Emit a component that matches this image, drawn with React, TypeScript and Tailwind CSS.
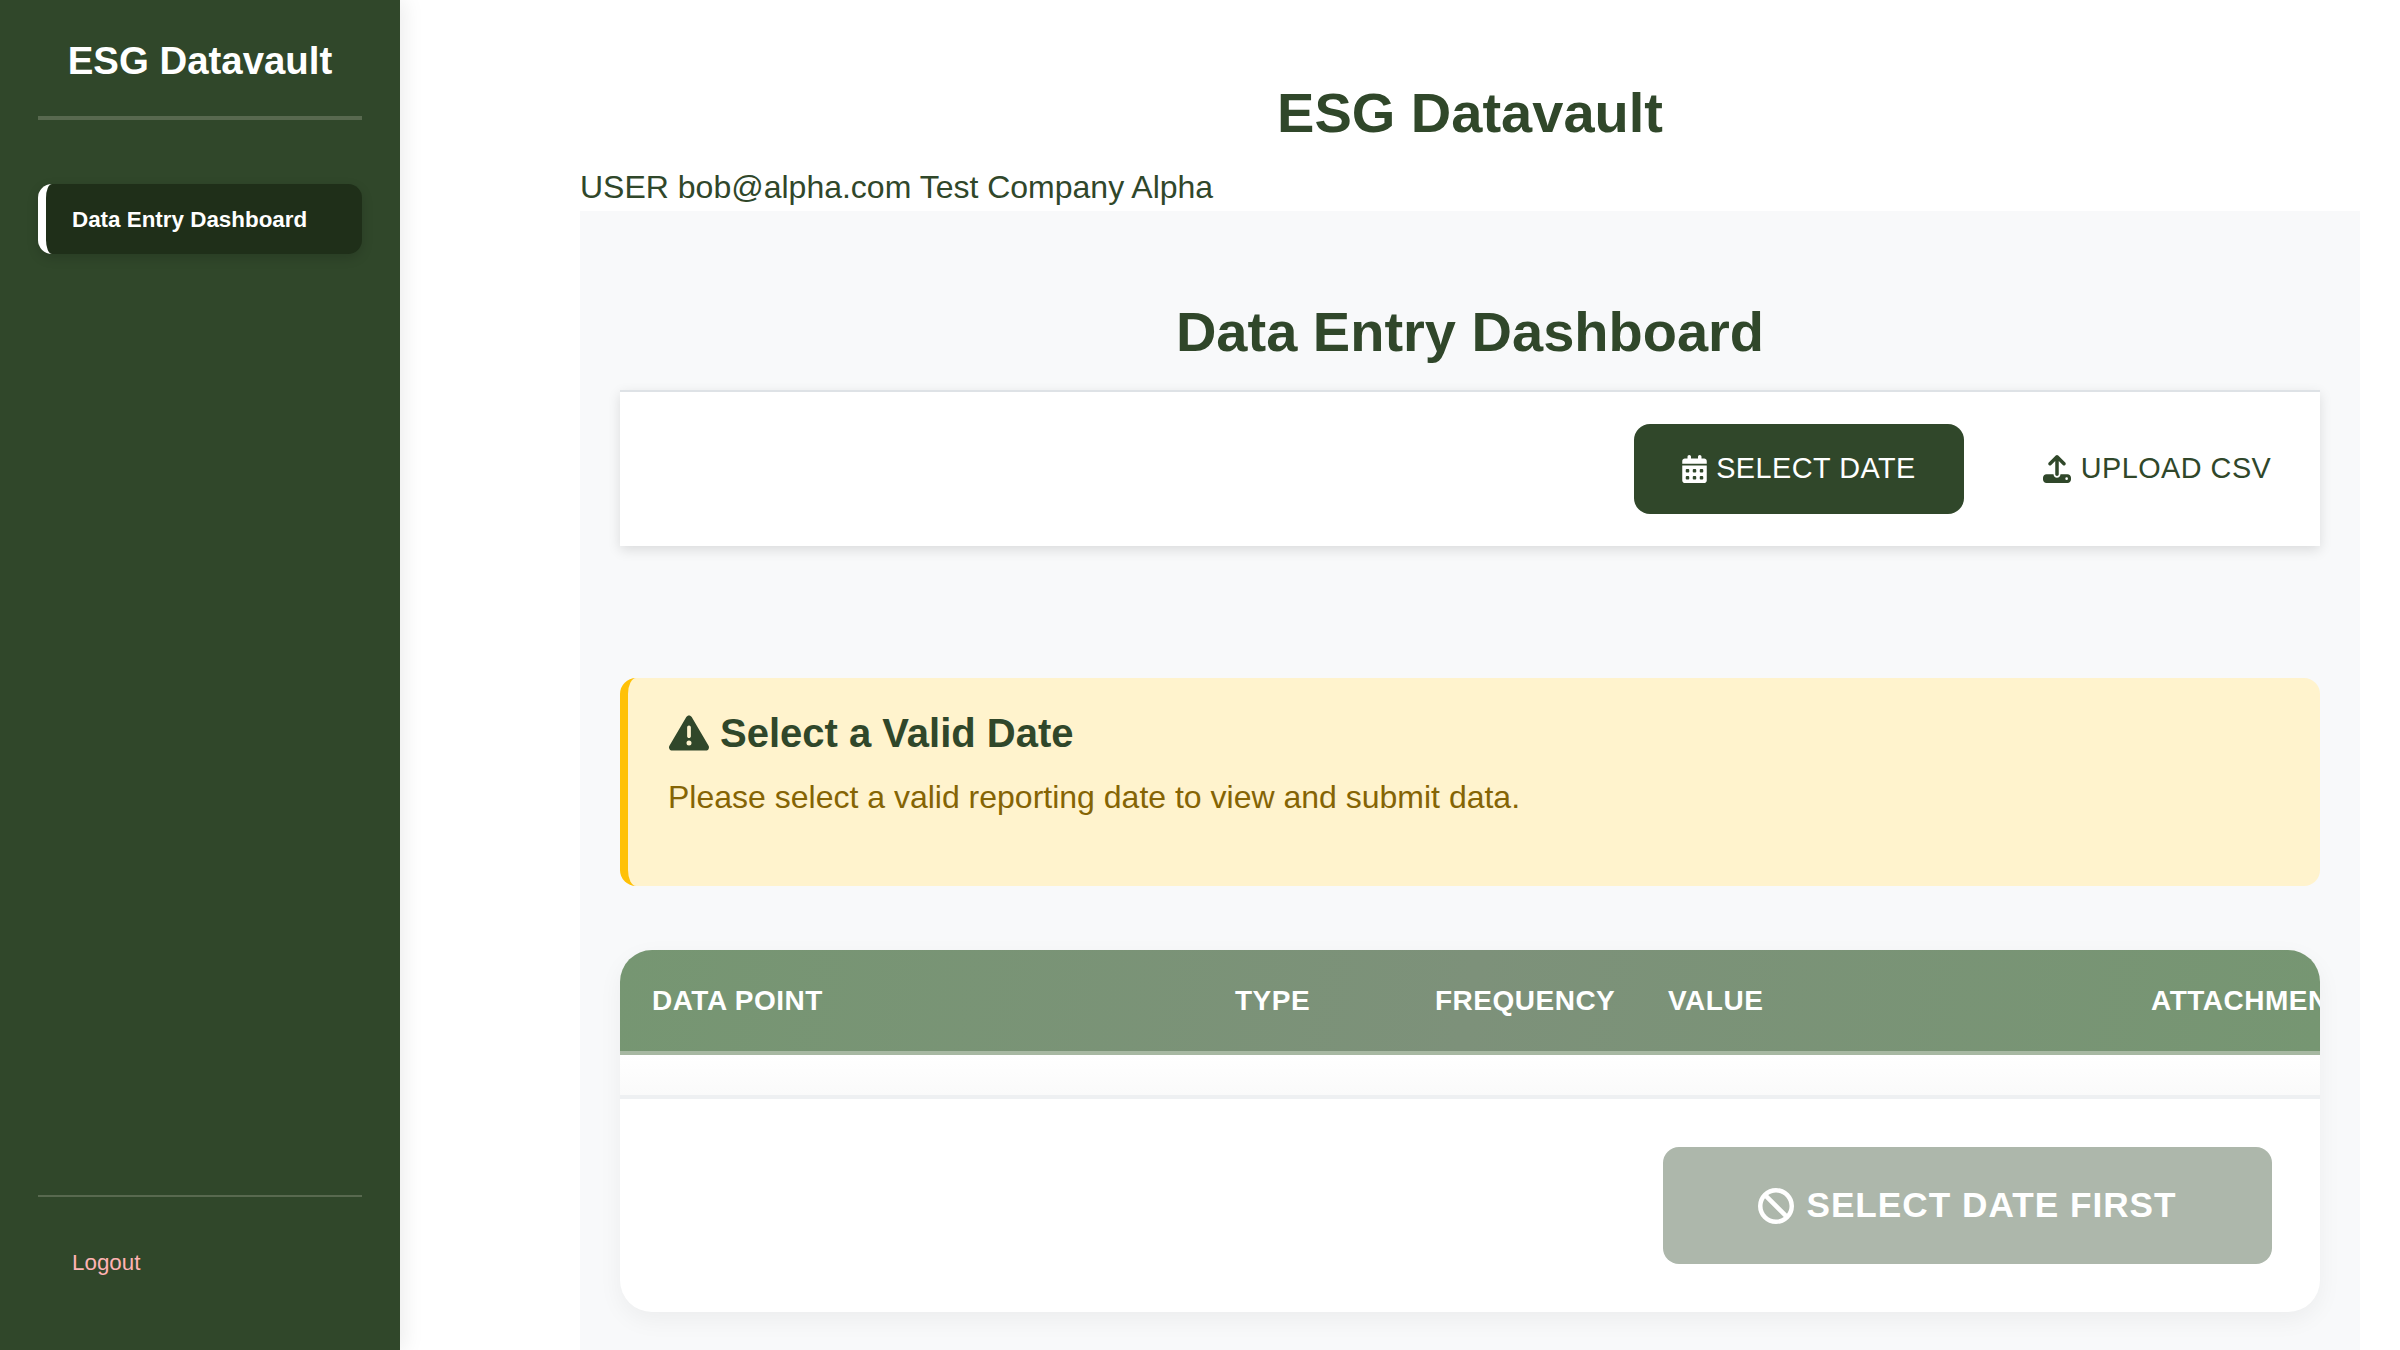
import { FaBan, FaCalendarDays, FaTriangleExclamation, FaUpload } from "react-icons/fa6";

const columns = ["DATA POINT", "TYPE", "FREQUENCY", "VALUE", "ATTACHMENT"];

export default function App() {
  return (
    <div className="flex h-[1350px] overflow-hidden bg-white font-['Liberation_Sans',Arial,sans-serif] text-[#30472a]">
      <aside className="w-[400px] shrink-0 bg-[#30472a] px-[38px] flex flex-col shadow-[4px_0_20px_rgba(0,0,0,0.08)]">
        <div className="h-[120px] border-b-4 border-[#58694f] flex items-start justify-center pt-[38px]">
          <h2 className="text-[38.4px] leading-[46px] font-bold text-white">ESG Datavault</h2>
        </div>
        <nav className="mt-[64px] flex-1">
          <a className="flex h-[70px] items-center rounded-[14px] border-l-[8px] border-white bg-[#1f2f19] pl-[26px] pt-[1px] text-[22.4px] font-bold text-white shadow-[0_4px_12px_rgba(0,0,0,0.15)]">
            Data Entry Dashboard
          </a>
        </nav>
        <div className="h-[155px] border-t-2 border-[#58694f] pl-[34px] pt-[52px]">
          <a className="text-[22.4px] leading-[28px] text-[#ffb3b3]">Logout</a>
        </div>
      </aside>

      <main className="flex-1 pl-[180px] pr-[40px] flex flex-col">
        <h1 className="mt-[82px] text-center text-[56px] leading-[62px] font-bold">ESG Datavault</h1>
        <div className="mt-[14px] h-[53px] text-[32px] leading-[59px]">USER bob@alpha.com Test Company Alpha</div>
        <section className="flex-1 bg-[#f8f9fa] px-[40px]">
          <h2 className="mt-[88px] h-[91px] text-center text-[56px] leading-[66px] font-bold">Data Entry Dashboard</h2>

          <div className="h-[156px] border-t-2 border-[#dee2e6] bg-white shadow-[0_4px_12px_rgba(0,0,0,0.12)] flex items-center justify-end">
            <button className="h-[90px] w-[330px] rounded-[16px] bg-[#30472a] text-white flex items-center justify-center gap-[9px] text-[28.8px] tracking-[0.5px]">
              <FaCalendarDays className="w-[25px] h-[28px]" />
              SELECT DATE
            </button>
            <button className="ml-[30px] h-[90px] w-[326px] flex items-center justify-center gap-[10px] text-[28.8px] tracking-[0.5px]">
              <FaUpload className="w-[28px] h-[28px]" />
              UPLOAD CSV
            </button>
          </div>

          <div className="mt-[132px] h-[208px] rounded-[16px] border-l-[8px] border-[#ffc107] bg-[#fff3cd] pl-[40px] pt-[32px]">
            <div className="flex items-center gap-[10px] text-[40px] leading-[46px] font-bold">
              <FaTriangleExclamation className="w-[42px] h-[40px]" />
              Select a Valid Date
            </div>
            <p className="mt-[22px] text-[32px] leading-[38px] text-[#856404]">Please select a valid reporting date to view and submit data.</p>
          </div>

          <div className="mt-[64px] h-[362px] overflow-hidden rounded-[32px] bg-white shadow-[0_8px_24px_rgba(0,0,0,0.05)]">
            <div className="h-[105px] border-b-4 border-[#a7b8a2] bg-[linear-gradient(100deg,#769672,#7d917a_50%,#769672)] grid grid-cols-[583px_200px_233px_483px_200px] items-center shadow-[0_4px_12px_rgba(0,0,0,0.06)]">
              {columns.map((c) => (
                <div key={c} className="pl-[32px] text-[28px] font-bold text-white tracking-[0.5px] whitespace-nowrap">
                  {c}
                </div>
              ))}
            </div>
            <div className="h-[44px] border-b-4 border-[#eef0f2] bg-[linear-gradient(#ffffff,#fafafa)]" />
            <div className="flex justify-end pt-[48px] pr-[48px]">
              <button className="h-[117px] w-[609px] rounded-[16px] bg-[#adb7ab] text-white flex items-center justify-center gap-[12px] text-[35.2px] font-bold tracking-[1px]">
                <FaBan className="w-[36px] h-[36px]" />
                SELECT DATE FIRST
              </button>
            </div>
          </div>
        </section>
      </main>
    </div>
  );
}
